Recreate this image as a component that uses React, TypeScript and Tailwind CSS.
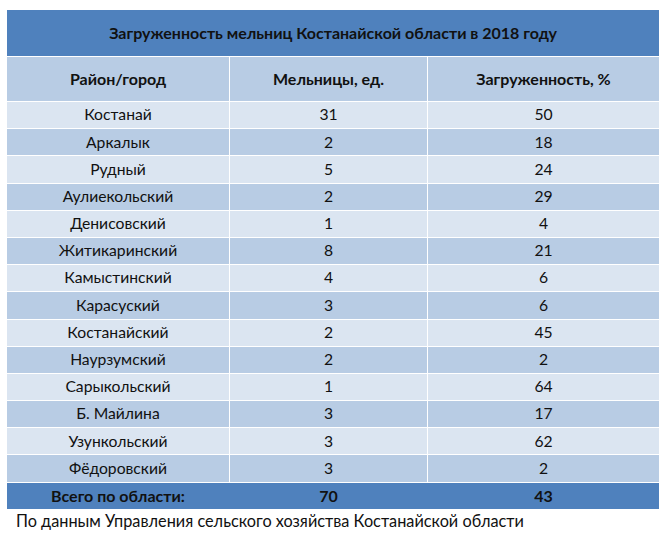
import React from 'react'

const rows: [string, string, string][] = [
  ['Костанай', '31', '50'],
  ['Аркалык', '2', '18'],
  ['Рудный', '5', '24'],
  ['Аулиекольский', '2', '29'],
  ['Денисовский', '1', '4'],
  ['Житикаринский', '8', '21'],
  ['Камыстинский', '4', '6'],
  ['Карасуский', '3', '6'],
  ['Костанайский', '2', '45'],
  ['Наурзумский', '2', '2'],
  ['Сарыкольский', '1', '64'],
  ['Б. Майлина', '3', '17'],
  ['Узункольский', '3', '62'],
  ['Фёдоровский', '3', '2'],
]

const App = () => {
  return (
    <div className="w-[666px] h-[539px] bg-white pt-[10px] pl-[7px] text-[#111] font-['Lato','Liberation_Sans',sans-serif]">
      <div className="w-[652px] flex flex-col gap-y-px bg-white">
        <div className="h-[46px] bg-[#4f81bd] flex items-center justify-center font-bold text-[16px]">
          Загруженность мельниц Костанайской области в 2018 году
        </div>

        <div className="h-[44px] grid grid-cols-[222px_197px_231px] gap-x-px font-bold text-[16px]">
          <div className="bg-[#b8cce4] flex items-center justify-center">Район/город</div>
          <div className="bg-[#b8cce4] flex items-center justify-center">Мельницы, ед.</div>
          <div className="bg-[#b8cce4] flex items-center justify-center">Загруженность, %</div>
        </div>

        {rows.map((r, i) => (
          <div key={i} className="h-[26.2px] grid grid-cols-[222px_197px_231px] gap-x-px text-[15.7px]">
            {r.map((c, j) => (
              <div key={j} className={(i % 2 === 0 ? 'bg-[#dbe5f1]' : 'bg-[#b8cce4]') + ' flex items-center justify-center'}>
                {c}
              </div>
            ))}
          </div>
        ))}

        <div className="h-[26px] grid grid-cols-[222px_197px_231px] gap-x-px bg-[#4f81bd] font-bold text-[16px]">
          <div className="flex items-center justify-center">Всего по области:</div>
          <div className="flex items-center justify-center">70</div>
          <div className="flex items-center justify-center">43</div>
        </div>
      </div>
      <p className="pl-[9px] pt-[2px] text-[16.3px] leading-[20px]">
        По данным Управления сельского хозяйства Костанайской области
      </p>
    </div>
  )
}

export default App
